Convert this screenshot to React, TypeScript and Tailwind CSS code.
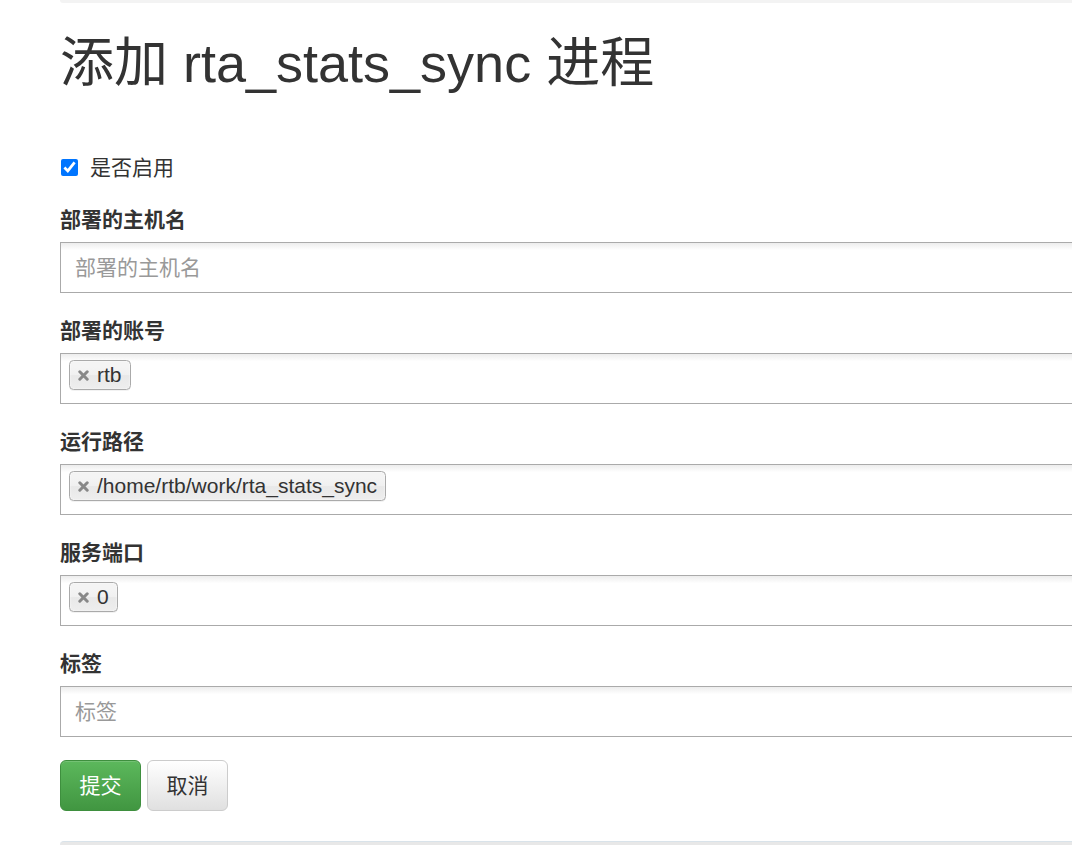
import React from "react";

const font = { fontFamily: '"Liberation Sans", "Noto Sans CJK SC", sans-serif' };

function Tag({ text }: { text: string }) {
  return (
    <span className="inline-flex items-center h-[30px] mt-[6px] ml-[8px] pl-[8px] pr-[8px] border border-[#aaa] rounded-[4.5px] bg-[linear-gradient(to_bottom,#f4f4f4_20%,#f0f0f0_50%,#e8e8e8_52%,#eeeeee_100%)] shadow-[inset_0_0_2px_#fff,0_1px_0_rgba(0,0,0,0.05)] text-[21px] leading-[20px] text-[#333]">
      <svg width="11" height="11" viewBox="0 0 11 11" className="mr-[8px]">
        <path d="M1.8 1.8 L9.2 9.2 M9.2 1.8 L1.8 9.2" stroke="#888" strokeWidth="3" strokeLinecap="round" />
      </svg>
      {text}
    </span>
  );
}

function Field({ label, placeholder, tag }: { label: string; placeholder?: string; tag?: string }) {
  return (
    <div className="mt-[22.5px]">
      <label className="block h-[30px] leading-[30px] text-[21px] font-bold text-[#333] mb-[7.5px]">{label}</label>
      <div className="h-[51px] border border-[#aaa] bg-[linear-gradient(to_bottom,#eeeeee_1%,#ffffff_15%)]">
        {tag ? (
          <Tag text={tag} />
        ) : (
          <input
            placeholder={placeholder}
            className="w-full h-full px-[14px] bg-transparent outline-none text-[21px] text-[#555] placeholder:text-[#999]"
          />
        )}
      </div>
    </div>
  );
}

export default function App() {
  return (
    <div className="w-full min-h-[845px] overflow-hidden bg-white" style={font}>
      <div className="ml-[60px] w-[1100px]">
        <div className="h-[3px] bg-[#f3f3f3] rounded-bl-[6px]" />
        <h1 className="mt-[31px] text-[54px] leading-[1.1] text-[#333] font-normal">添加 rta_stats_sync 进程</h1>

        <form>
          <div className="mt-[59px] h-[30px] flex items-center">
            <input type="checkbox" defaultChecked className="w-[17px] h-[17px] ml-[1px] accent-[#0075ff]" />
            <span className="ml-[12px] text-[21px] text-[#333]">是否启用</span>
          </div>

          <Field label="部署的主机名" placeholder="部署的主机名" />
          <Field label="部署的账号" tag="rtb" />
          <Field label="运行路径" tag="/home/rtb/work/rta_stats_sync" />
          <Field label="服务端口" tag="0" />
          <Field label="标签" placeholder="标签" />

          <div className="mt-[23px] flex gap-[6px]">
            <button
              type="button"
              className="w-[81px] h-[51px] rounded-[6px] border border-[#3e8f3e] bg-[linear-gradient(to_bottom,#5cb85c,#419641)] shadow-[inset_0_1px_0_rgba(255,255,255,0.15)] text-white text-[21px]"
            >
              提交
            </button>
            <button
              type="button"
              className="w-[81px] h-[51px] rounded-[6px] border border-[#ccc] bg-[linear-gradient(to_bottom,#ffffff,#e0e0e0)] shadow-[inset_0_1px_0_rgba(255,255,255,0.15)] text-[#333] text-[21px]"
            >
              取消
            </button>
          </div>
        </form>

        <div className="mt-[30px] h-[4px] border-t border-[#d9e3ea] bg-[#e8e8e8] rounded-tl-[6px]" />
      </div>
    </div>
  );
}
